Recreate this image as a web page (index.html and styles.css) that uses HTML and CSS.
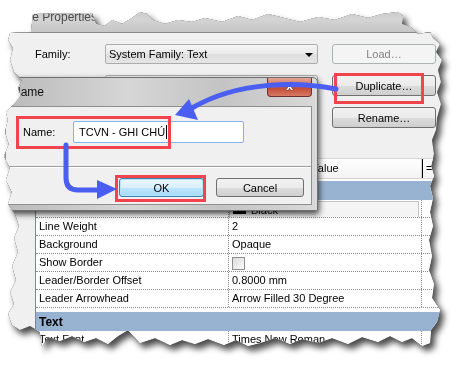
FILE: index.html
```html
<!DOCTYPE html>
<html lang="en">
<head>
  <meta charset="UTF-8" />
  <title>Type Properties - Duplicate</title>
  <link rel="stylesheet" href="styles.css">
</head>
<body>
  <div class="shot">
    <div class="win">
      <div class="titlebar"><span>Type Properties</span></div>

      <div class="content">
        <div class="props">
          <label>Family:</label>
          <div class="combo">System Family: Text<i class="caret"></i></div>
          <span></span>
          <button class="btn" disabled>Load…</button>

          <label></label>
          <div class="combo"><i class="caret"></i></div>
          <span></span>
          <button class="btn">Duplicate…</button>

          <span></span><span></span><span></span>
          <button class="btn">Rename…</button>
        </div>

        <div class="section"></div>

        <div class="grid">
          <div class="row head">
            <div class="cell"></div>
            <div class="cell">Value</div>
            <div class="cell eq">=</div>
          </div>
          <div class="gap2"></div>
          <div class="cat">
            <b></b>
            <svg class="fold" width="8" height="9" viewBox="0 0 8 9"><path d="M1 4 L4 1 L7 4 M1 8 L4 5 L7 8" fill="none" stroke="#000" stroke-width="1.3"/></svg>
          </div>
          <div class="row">
            <div class="cell"></div>
            <div class="cell"><div class="edit"><i class="swatch"></i>Black</div></div>
            <div class="cell"></div>
          </div>
          <div class="row">
            <div class="cell">Line Weight</div>
            <div class="cell">2</div>
            <div class="cell"></div>
          </div>
          <div class="row">
            <div class="cell">Background</div>
            <div class="cell">Opaque</div>
            <div class="cell"></div>
          </div>
          <div class="row">
            <div class="cell">Show Border</div>
            <div class="cell"><i class="check"></i></div>
            <div class="cell"></div>
          </div>
          <div class="row">
            <div class="cell">Leader/Border Offset</div>
            <div class="cell">0.8000 mm</div>
            <div class="cell"></div>
          </div>
          <div class="row">
            <div class="cell">Leader Arrowhead</div>
            <div class="cell">Arrow Filled 30 Degree</div>
            <div class="cell"></div>
          </div>
          <div class="gap4"></div>
          <div class="cat">
            <b>Text</b>
            <svg class="fold" width="8" height="9" viewBox="0 0 8 9"><path d="M1 4 L4 1 L7 4 M1 8 L4 5 L7 8" fill="none" stroke="#000" stroke-width="1.3"/></svg>
          </div>
          <div class="row">
            <div class="cell">Text Font</div>
            <div class="cell">Times New Roman</div>
            <div class="cell"></div>
          </div>
        </div>
      </div>

      <!-- the Name dialog on top of the window -->
      <div class="dlg">
        <div class="dlg-title">
          <span>Name</span>
          <div class="close">x</div>
        </div>
        <div class="dlg-client">
          <div class="name-row">
            <label>Name:</label>
            <div class="field">TCVN - GHI CHÚ<i class="cursor"></i></div>
          </div>
          <div class="sep"></div>
          <div class="dlg-buttons">
            <button class="btn default">OK</button>
            <button class="btn">Cancel</button>
          </div>
        </div>
      </div>

      <svg class="marks" width="470" height="372" viewBox="0 0 470 372">
        <rect x="335.5" y="74.5" width="87" height="28" fill="none" stroke="#f2444c" stroke-width="3"/>
        <rect x="17.5" y="117.5" width="152" height="30" fill="none" stroke="#f2444c" stroke-width="3"/>
        <rect x="116.5" y="176.5" width="88" height="24" fill="none" stroke="#f2444c" stroke-width="3"/>
        <path d="M336 89 C300 82, 240 80, 192 108" fill="none" stroke="#4a5ff2" stroke-width="5" stroke-linecap="round"/>
        <polygon points="175,115 189,99 198,120" fill="#4a5ff2"/>
        <path d="M66 145 L66 178 Q66 190 78 190 L100 190" fill="none" stroke="#4a5ff2" stroke-width="5" stroke-linecap="round"/>
        <polygon points="97,180 117,189 97,199" fill="#4a5ff2"/>
      </svg>
    </div>
  </div>
</body>
</html>
```

FILE: styles.css
```css
body {
  margin: 0;
  background: #fff;
  font-family: "Liberation Sans", Arial, sans-serif;
  font-size: 11px;
  color: #000;
  overflow: hidden;
}
.shot {
  width: 470px;
  height: 372px;
  filter: drop-shadow(0 0 0.6px #222) drop-shadow(4px 5px 3px rgba(0,0,0,0.7));
}
.win {
  position: relative;
  width: 470px;
  height: 372px;
  background: #f0f0f0;
  display: flex;
  flex-direction: column;
  clip-path: polygon(10px 33px, 31px 32px, 33px 14px, 92px 13px, 96px 24px, 105px 26px, 112px 20px, 122px 24px, 132px 18px, 140px 12px, 147px 14px, 152px 20px, 165px 24px, 178px 20px, 192px 22px, 205px 18px, 222px 22px, 238px 16px, 252px 20px, 268px 14px, 284px 18px, 300px 22px, 318px 17px, 335px 20px, 352px 14px, 368px 18px, 382px 14px, 398px 12px, 403px 16px, 402px 24px, 412px 28px, 418px 34px, 430px 32px, 433px 38px, 440px 44px, 436px 52px, 442px 60px, 438px 70px, 441px 82px, 437px 92px, 441px 104px, 437px 118px, 436px 130px, 432px 140px, 434px 154px, 431px 166px, 434px 176px, 430px 186px, 433px 198px, 430px 212px, 433px 226px, 429px 240px, 432px 256px, 429px 270px, 434px 284px, 432px 298px, 440px 310px, 437px 322px, 431px 330px, 430px 343px, 422px 346px, 412px 338px, 402px 342px, 390px 336px, 378px 342px, 362px 337px, 348px 344px, 332px 338px, 318px 343px, 302px 339px, 290px 344px, 275px 338px, 260px 343px, 248px 346px, 236px 340px, 224px 345px, 208px 339px, 195px 344px, 182px 340px, 170px 345px, 155px 338px, 140px 343px, 128px 330px, 118px 336px, 108px 344px, 96px 338px, 84px 342px, 72px 336px, 60px 341px, 48px 337px, 42px 346px, 40px 332px, 30px 326px, 20px 330px, 12px 325px, 8px 314px, 14px 304px, 10px 292px, 16px 280px, 12px 266px, 18px 252px, 14px 238px, 19px 226px, 15px 214px, 8px 204px, 12px 192px, 6px 180px, 10px 168px, 4px 156px, 9px 144px, 5px 132px, 8px 120px, 6px 112px, 14px 104px, 21px 96px, 18px 88px, 22px 80px, 14px 72px, 10px 60px, 13px 48px, 8px 40px);
}
.titlebar {
  height: 32px;
  flex: none;
  border-bottom: 1px solid #8a8a8a;
  background: linear-gradient(#bdbdbd, #d4d4d4 60%, #c6c6c6);
  padding-left: 13px;
  line-height: 31px;
  font-size: 12px;
  color: #4a4a4a;
}
.titlebar span {
  position: relative;
  top: 2px;
}
.content {
  padding-top: 11px;
}
.props {
  display: grid;
  grid-template-columns: 70px 213px 14px 104px;
  grid-template-rows: 20px 21px 21px;
  row-gap: 11px;
  padding-left: 35px;
}
.props label {
  line-height: 20px;
}
.combo {
  position: relative;
  border: 1px solid #acacac;
  border-radius: 2px;
  background: linear-gradient(#f6f6f6, #e9e9e9 50%, #dedede 51%, #e5e5e5);
  padding-left: 3px;
  line-height: 18px;
}
.caret {
  position: absolute;
  right: 4px;
  top: 8px;
  border-left: 4px solid transparent;
  border-right: 4px solid transparent;
  border-top: 4px solid #000;
}
.btn {
  font-family: "Liberation Sans", Arial, sans-serif;
  font-size: 11px;
  color: #000;
  border: 1px solid #707070;
  border-radius: 3px;
  background: linear-gradient(#f2f2f2, #ebebeb 50%, #dddddd 51%, #cfcfcf);
  padding: 0;
}
.btn:disabled {
  border-color: #adb2b5;
  background: #f4f4f4;
  color: #838383;
}
.btn.default {
  border-color: #3c7fb1;
  background: linear-gradient(#eaf6fd, #d9f0fc 50%, #bee6fd 51%, #a7d9f5);
  box-shadow: inset 0 0 0 1px #b8e2f8;
}
.section {
  height: 30px;
}
.grid {
  margin-left: 35px;
  border-left: 1px solid #828790;
  background: #fff;
}
.row {
  display: grid;
  grid-template-columns: 193px 193px 1fr;
  height: 18px;
  border-bottom: 1px dotted #8a8a8a;
  box-sizing: border-box;
}
.cell {
  border-right: 1px dotted #8a8a8a;
  padding-left: 3px;
  line-height: 17px;
  white-space: nowrap;
  overflow: hidden;
}
.row .cell:last-child {
  border-right: none;
}
.row.head {
  height: 21px;
  background: linear-gradient(#ffffff, #f3f3f3);
  border-bottom: 1px solid #d5d5d5;
  border-top: 1px solid #d5d5d5;
}
.row.head .cell {
  border-right: 1px solid #d5d5d5;
  line-height: 19px;
  text-align: center;
  padding-left: 0;
}
.row.head .eq {
  border-left: 1px solid #000;
  text-align: left;
  padding-left: 3px;
}
.gap2 { height: 2px; }
.gap4 { height: 4px; }
.cat {
  display: flex;
  align-items: center;
  justify-content: space-between;
  height: 19px;
  background: #98b3d1;
  padding: 0 0 0 3px;
  font-size: 12px;
}
.cat .fold {
  margin-right: 8px;
}
.edit {
  display: flex;
  align-items: center;
  gap: 5px;
  height: 16px;
  margin: 1px 2px 0 -3px;
  border: 1px solid #c4c4c4;
  background: #f4f4f4;
  padding-left: 3px;
}
.swatch {
  display: inline-block;
  width: 13px;
  height: 8px;
  background: #000;
}
.check {
  display: inline-block;
  width: 11px;
  height: 11px;
  margin-top: 3px;
  border: 1px solid #8f8f8f;
  background: linear-gradient(135deg, #dcdcdc, #fafafa);
}

/* Name dialog */
.dlg {
  position: absolute;
  left: 0;
  top: 77px;
  width: 318px;
  height: 134px;
  display: flex;
  flex-direction: column;
  background: linear-gradient(90deg, #b9b9b9, #d6d6d6 40%, #c4c4c4 70%, #d9d9d9);
  border: 1px solid #6f6f6f;
  border-radius: 5px 5px 0 0;
  box-sizing: border-box;
  box-shadow: 1px 3px 6px rgba(0,0,0,0.75);
}
.dlg-title {
  height: 28px;
  display: flex;
  justify-content: space-between;
  padding-left: 11px;
  font-size: 12px;
  color: #111;
}
.dlg-title span {
  line-height: 28px;
}
.close {
  width: 45px;
  height: 19px;
  margin-right: 5px;
  border: 1px solid #6b3030;
  border-top: none;
  border-radius: 0 0 4px 4px;
  box-sizing: border-box;
  background: linear-gradient(#e4a594, #cf6e5a 45%, #c24a36 55%, #d77a63);
  color: #fff;
  font-weight: bold;
  font-size: 12px;
  text-align: center;
  line-height: 16px;
  text-shadow: 0 0 2px #333;
}
.dlg-client {
  flex: 1;
  margin: 0 5px 5px 4px;
  border: 1px solid #8e8f8f;
  background: #f0f0f0;
  display: flex;
  flex-direction: column;
}
.name-row {
  display: flex;
  align-items: center;
  margin-top: 14px;
  padding-left: 17px;
}
.name-row label {
  width: 50px;
}
.field {
  width: 171px;
  height: 22px;
  box-sizing: border-box;
  border: 1px solid #7eb4ea;
  border-radius: 2px;
  background: #fff;
  padding-left: 5px;
  line-height: 20px;
  font-size: 11px;
}
.cursor {
  display: inline-block;
  width: 1px;
  height: 14px;
  margin-left: 1px;
  background: #000;
  vertical-align: -3px;
}
.sep {
  margin-top: 23px;
  border-top: 1px solid #a0a0a0;
  border-bottom: 1px solid #fff;
}
.dlg-buttons {
  display: flex;
  gap: 12px;
  margin-top: 10px;
  padding-left: 113px;
}
.dlg-buttons .btn {
  width: 85px;
  height: 19px;
}
.dlg-buttons .btn + .btn {
  width: 88px;
}
.marks {
  position: absolute;
  left: 0;
  top: 0;
}
```
